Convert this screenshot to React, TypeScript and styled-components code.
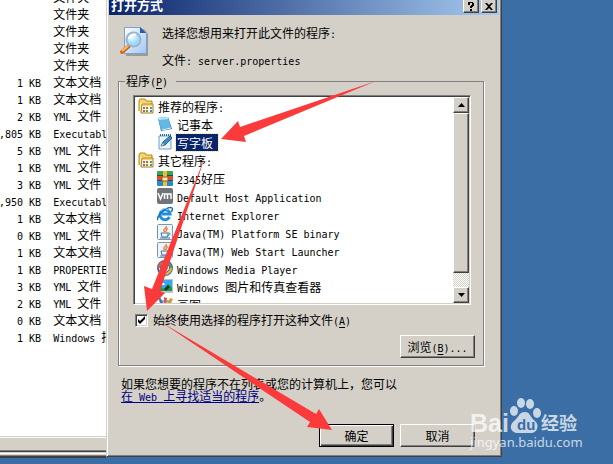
import React from "react";
import styled, { createGlobalStyle, css } from "styled-components";

const Global = createGlobalStyle`
  * { box-sizing: border-box; }
  body { margin: 0; background: #3a6ea5; }
  body, button, input { font: 12px/16px "Noto Sans CJK SC", "Noto Sans", sans-serif; color: #000; }
`;

const Latin = styled.span`
  font-family: "DejaVu Sans Mono", "Liberation Mono", monospace;
  font-size: 10px;
  line-height: 1;
  white-space: pre;
`;

/* Sets half-width runs in the fixed-pitch face, two per full-width glyph. */
function Txt({ children }: { children: string }) {
  const runs = children.match(/[\x00-\x7f]+|[^\x00-\x7f]+/g) || [];
  return (
    <>
      {runs.map((r, i) => (/^[\x00-\x7f]/.test(r) ? <Latin key={i}>{r}</Latin> : r))}
    </>
  );
}

const Key = styled.u`
  font-family: "DejaVu Sans Mono", "Liberation Mono", monospace;
  font-size: 10px;
  line-height: 1;
  text-underline-offset: 2px;
`;

const Desktop = styled.main`
  position: relative;
  display: grid;
  grid-template-columns: minmax(106px, 106fr) minmax(396px, 396fr) 111fr;
  align-items: start;
  min-height: 100vh;
  overflow: hidden;
  background: #3a6ea5;
`;

const Explorer = styled.section`
  display: flex;
  flex-direction: column;
  align-self: stretch;
  min-width: 0;
  margin-bottom: 6px;
  overflow: hidden;
  background: #d4d0c8;
  border-bottom: 2px solid #404040;
`;

const FilePane = styled.div`
  flex: 1;
  overflow: hidden;
  background: #fff;
`;

const FileTable = styled.table`
  margin: -12px 0 0 -1px;
  border-collapse: collapse;
  white-space: nowrap;
  td { height: 17px; padding: 0; line-height: 17px; }
  td:first-child { min-width: 41px; width: 41px; text-align: right; }
  td:last-child { padding-left: 12px; }
`;

const StatusBar = styled.div`
  height: 14px;
  border-top: 1px solid #fff;
  border-bottom: 1px solid #808080;
  box-shadow: 0 -1px #d4d0c8;
`;

const LowerFrame = styled.div`
  height: 5px;
  border-top: 1px solid #404040;
  border-bottom: 1px solid #808080;
  background: linear-gradient(#d4d0c8 1px, #fff 1px, #fff 2px, #e0d4cc 2px);
`;

const Dialog = styled.section`
  display: flex;
  flex-direction: column;
  background: #d4d0c8;
  border: 1px solid;
  border-color: #d4d0c8 #404040 #404040 #d4d0c8;
  border-top: 0;
  box-shadow: inset 1px 0 #fff, inset -1px -1px #808080;
  padding: 0 2px 9px;
`;

const TitleBar = styled.header`
  display: flex;
  align-items: flex-start;
  height: 15px;
  padding: 0 2px;
  background: linear-gradient(90deg, #0a246a, #a6caf0);
  color: #fff;
`;

const Title = styled.h1`
  flex: 1;
  margin: -3px 0 0;
  font-size: 13px;
  line-height: 16px;
  font-weight: 700;
`;

const raised = css`
  border: 1px solid;
  border-color: #fff #404040 #404040 #fff;
  box-shadow: inset -1px -1px #808080;
  background: #d4d0c8;
`;

const CaptionButton = styled.button<{ $gap?: boolean }>`
  ${raised}
  display: grid;
  place-items: center;
  width: 16px;
  height: 14px;
  margin: -1px 0 0 ${(p) => (p.$gap ? 2 : 0)}px;
  padding: 0;
`;

const Intro = styled.div`
  display: flex;
  gap: 13px;
  padding: 10px 10px 0;
`;

const IntroText = styled.div`
  display: flex;
  flex-direction: column;
  gap: 11px;
  p { margin: 0; line-height: 16px; }
`;

const Group = styled.fieldset`
  min-width: 0;
  margin: 5px 15px 0 9px;
  padding: 6px 8px 7px 14px;
  border: 1px solid #808080;
  box-shadow: 1px 1px #fff, inset 1px 0 #fff;
  legend { margin-left: -8px; padding: 0 8px 0 1px; line-height: 16px; }
`;

const ListBox = styled.div`
  display: flex;
  height: 210px;
  margin-right: 4px;
  background: #fff;
  border: 1px solid;
  border-color: #808080 #fff #fff #808080;
  box-shadow: inset 1px 1px #404040, inset -1px -1px #d4d0c8;
  padding: 1px;
`;

const Tree = styled.ul`
  flex: 1;
  min-width: 0;
  margin: 0;
  padding: 0;
  overflow: hidden;
  list-style: none;
`;

const Item = styled.li<{ $child?: boolean }>`
  display: flex;
  align-items: center;
  gap: 3px;
  height: 18px;
  padding-left: ${(p) => (p.$child ? 22 : 3)}px;
  white-space: nowrap;
  svg { flex: none; }
`;

const Label = styled.span<{ $on?: boolean }>`
  height: 17px;
  padding: 0 1px;
  line-height: 17px;
  ${(p) => p.$on && css`
    padding-right: 5px;
    color: #fff;
    background: #0a246a;
    outline: 1px dotted #f5db95;
  `}
`;

const ScrollBar = styled.div`
  display: flex;
  flex-direction: column;
  width: 16px;
  background: repeating-conic-gradient(#fff 0 25%, #d4d0c8 0 50%) 0 0 / 2px 2px;
`;

const ScrollButton = styled.button`
  ${raised}
  display: grid;
  place-items: center;
  height: 16px;
  padding: 0;
`;

const Thumb = styled.div`
  ${raised}
  flex: 0 0 160px;
  margin-bottom: auto;
`;

const Check = styled.label`
  display: flex;
  align-items: center;
  gap: 5px;
  margin: 7px 0 0 2px;
  input {
    appearance: none;
    width: 13px;
    height: 13px;
    margin: 0;
    border: 1px solid;
    border-color: #808080 #fff #fff #808080;
    box-shadow: inset 1px 1px #404040, inset -1px -1px #d4d0c8;
    background: #fff;
  }
  input:checked {
    background: #fff url("data:image/svg+xml,%3Csvg xmlns='http://www.w3.org/2000/svg' viewBox='0 0 11 11'%3E%3Cpath d='M2 4v3l2 2 5-5V1L4 6z'/%3E%3C/svg%3E") center / 11px 11px no-repeat;
  }
`;

const PushButton = styled.button<{ $default?: boolean }>`
  ${raised}
  width: 75px;
  height: 23px;
  padding: 0;
  ${(p) => p.$default && css`
    border-color: #000;
    box-shadow: inset 1px 1px #fff, inset -1px -1px #404040, inset -2px -2px #808080;
  `}
`;

const GroupActions = styled.div`
  display: flex;
  justify-content: flex-end;
  margin-top: 7px;
`;

const Hint = styled.p`
  margin: 12px 12px 0;
  line-height: 12px;
  a { color: #000080; text-underline-offset: 1px; }
`;

const Actions = styled.footer`
  display: flex;
  justify-content: flex-end;
  gap: 6px;
  margin: 21px 24px 0 0;
`;

const Overlay = styled.svg`
  position: absolute;
  top: 0;
  left: 0;
  pointer-events: none;
`;

const Mark = styled.div`
  position: absolute;
  top: 398px;
  left: 470px;
  color: #fff;
  opacity: 0.72;
`;

const Brand = styled.div`
  display: flex;
  height: 37px;
  font: 700 25px/26px "Liberation Sans", sans-serif;
  span { padding-top: 12px; }
  strong { padding-top: 12px; font: 700 18px/24px "Noto Sans CJK SC", sans-serif; }
`;

const Site = styled.div`
  font: 13px/14px "Noto Sans", sans-serif;
`;

type Kind = "folder" | "note" | "write" | "zip" | "vm" | "ie" | "java" | "media" | "picture" | "paint";

function Icon({ kind }: { kind: Kind }) {
  return (
    <svg width="16" height="16" viewBox="0 0 16 16" aria-hidden="true">
      {kind === "folder" && <>
        <path d="M1 13V3l1-2h5l1 2h6v3" fill="#f7d66b" stroke="#b88916" />
        <path d="M2 5h10v2H4v7H2z" fill="#fff0a5" />
        <path d="M4 6h11v9H3z" fill="#fff8df" stroke="#a87c1c" />
        <path d="M4 7h11" stroke="#e1a52c" />
        <path d="M5 9h2v2H5zM12 12h2v2h-2z" fill="#4a86cf" /><path d="M8 9h2v2H8zM5 12h2v2H5z" fill="#d35a38" /><path d="M12 9h2v2h-2zM8 12h2v2H8z" fill="#57a64a" />
      </>}
      {kind === "note" && <>
        <path d="M1 2l10-1 4 12-11 2z" fill="#1b6fae" /><path d="M1 2l10-1 3 11-10 2z" fill="#62b8e6" /><path d="M1 2l10-1v2L2 4z" fill="#b8e8fb" /><path d="M5 14l9-2" stroke="#edf7fb" />
      </>}
      {kind === "write" && <>
        <path d="M2 2h12v13H2z" fill="#eaf6ff" stroke="#6c9fc8" /><path d="M3 1h11" stroke="#286ba5" strokeWidth="2" strokeDasharray="1 1" />
        <path d="M4 12l2-4 7-6 2 2-7 7z" fill="#3c91ce" stroke="#225b8c" /><path d="M4 12l2-3 1 2z" fill="#f3cf80" />
      </>}
      {kind === "zip" && <>
        <rect y="1" width="16" height="5" rx="1" fill="#39a84c" /><rect y="6" width="16" height="5" fill="#e14b37" /><rect y="11" width="16" height="5" rx="1" fill="#278ac7" />
        <path d="M0 5.5h16M0 10.5h16" stroke="#174e5b" /><path d="M6 1h4v15H6z" fill="#f1bb38" /><path d="M5 7h6v4H5z" fill="#fff0a3" stroke="#8e5c17" />
      </>}
      {kind === "vm" && <>
        <rect width="16" height="16" rx="2" fill="#70747a" /><path d="M1 5l2.5 6L6 5M7.5 11V6h3v5V6H14v5" fill="none" stroke="#fff" strokeWidth="1.5" />
      </>}
      {kind === "ie" && <>
        <path d="M12.5 11a5 5 0 1 1 .5-3H5" fill="none" stroke="#238edb" strokeWidth="3" /><path d="M1 14C-2 11 11-1 15 2c1 1 0 3-1 4" fill="none" stroke="#1671b8" strokeWidth="1.5" /><path d="M4 5c2-3 5-3 7-1" fill="none" stroke="#9bdafa" />
      </>}
      {kind === "java" && <>
        <rect x=".5" y=".5" width="15" height="15" rx="1" fill="#eef4f8" stroke="#7797ad" /><path d="M8 8c-4-3 3-3 1-6M9 8c-1-2 2-2 1-4" fill="none" stroke="#e87b25" strokeWidth="1.3" /><path d="M4 9h7v2l-1 2H5zM11 9c4 0 1 3-1 3M3 14h10" fill="none" stroke="#44779f" />
      </>}
      {kind === "media" && <>
        <circle cx="8" cy="8" r="7" fill="#fff" stroke="#3b63b5" strokeWidth="2" /><path d="M8 1a7 7 0 0 1 7 7H8z" fill="#48aa45" /><path d="M8 15a7 7 0 0 0 7-7H8z" fill="#efb82e" /><path d="M8 1a7 7 0 0 0-7 7h7z" fill="#e76430" /><circle cx="8" cy="8" r="4.5" fill="#eef7ff" stroke="#385f9b" /><path d="M6 5l5 3-5 3z" fill="#2765b1" />
      </>}
      {kind === "picture" && <>
        <path d="M0 1h16v14H0z" fill="#bac3c9" /><path d="M1 2h14v11H1z" fill="#35a9ed" /><path d="M1 13l3-4 3 2 4-5 4 4v3z" fill="#259341" /><path d="M2 5h5l1 2H3z" fill="#fff" /><path d="M7 11l4-4 2 2-4 4z" fill="#123f28" />
      </>}
      {kind === "paint" && <>
        <path d="M3 5h11l-2 11H5z" fill="#c5d3e4" stroke="#53759b" /><path d="M1 2l2-1 5 10-2 1z" fill="#3d72c1" /><path d="M7 1l3 1-1 9H7z" fill="#d8613e" /><path d="M13 2l3 1-5 9-2-1z" fill="#d49b2f" />
      </>}
    </svg>
  );
}

function DocumentSearch() {
  return (
    <svg width="30" height="32" viewBox="0 0 30 32" aria-hidden="true">
      <defs>
        <linearGradient id="paper" x2="1" y2="1"><stop stopColor="#fff" /><stop offset="1" stopColor="#9fc5f1" /></linearGradient>
        <radialGradient id="lens" cx=".35" cy=".3"><stop stopColor="#fff" /><stop offset="1" stopColor="#9bdcf9" /></radialGradient>
      </defs>
      <path d="M6 4h19l4 5v22H7z" fill="#777" opacity=".6" />
      <path d="M5.5 2.5h16l6 6v20h-22z" fill="url(#paper)" stroke="#819fcf" />
      <path d="M21 2v6h6z" fill="#245cae" />
      <path d="M10 21l-7 6" stroke="#c96a1c" strokeWidth="4" strokeLinecap="round" /><path d="M3 26l6-5" stroke="#ffb868" strokeWidth="2" />
      <circle cx="14.5" cy="14.5" r="7" fill="url(#lens)" stroke="#9db4cc" strokeWidth="2" /><path d="M10 14c0-4 5-5 7-4" fill="none" stroke="#fff" strokeWidth="2" />
    </svg>
  );
}

const files: [string, string][] = [
  ["", "文件夹"], ["", "文件夹"], ["", "文件夹"], ["", "文件夹"], ["", "文件夹"],
  ["1 KB", "文本文档"], ["1 KB", "文本文档"], ["2 KB", "YML 文件"], [",805 KB", "Executable"],
  ["5 KB", "YML 文件"], ["1 KB", "YML 文件"], ["3 KB", "YML 文件"], [",950 KB", "Executable"],
  ["1 KB", "文本文档"], ["0 KB", "YML 文件"], ["1 KB", "文本文档"], ["1 KB", "PROPERTIES 文件"],
  ["3 KB", "YML 文件"], ["2 KB", "YML 文件"], ["0 KB", "文本文档"], ["1 KB", "Windows 批处理文件"],
];

const programs: { kind: Kind; name: string; child?: boolean; on?: boolean }[] = [
  { kind: "folder", name: "推荐的程序:" },
  { kind: "note", name: "记事本", child: true },
  { kind: "write", name: "写字板", child: true, on: true },
  { kind: "folder", name: "其它程序:" },
  { kind: "zip", name: "2345好压", child: true },
  { kind: "vm", name: "Default Host Application", child: true },
  { kind: "ie", name: "Internet Explorer", child: true },
  { kind: "java", name: "Java(TM) Platform SE binary", child: true },
  { kind: "java", name: "Java(TM) Web Start Launcher", child: true },
  { kind: "media", name: "Windows Media Player", child: true },
  { kind: "picture", name: "Windows 图片和传真查看器", child: true },
  { kind: "paint", name: "画图", child: true },
];

export default function App() {
  return (
    <Desktop>
      <Global />
      <Explorer>
        <FilePane>
          <FileTable>
            <tbody>
              {files.map(([size, type], i) => (
                <tr key={i}><td><Txt>{size}</Txt></td><td><Txt>{type}</Txt></td></tr>
              ))}
            </tbody>
          </FileTable>
        </FilePane>
        <StatusBar />
        <LowerFrame />
      </Explorer>

      <Dialog aria-label="打开方式">
        <TitleBar>
          <Title>打开方式</Title>
          <CaptionButton aria-label="帮助">
            <svg width="8" height="9" viewBox="0 0 8 9"><path d="M1 0h5v1h1v3H6v1H5v1H3V4h1V3h1V1H3v2H1V1h0zM3 7h2v2H3z" /></svg>
          </CaptionButton>
          <CaptionButton aria-label="关闭" $gap>
            <svg width="8" height="7" viewBox="0 0 8 7"><path d="M0 0h2l2 2 2-2h2L5 3.5 8 7H6L4 5 2 7H0l3-3.5z" /></svg>
          </CaptionButton>
        </TitleBar>
        <Intro>
          <DocumentSearch />
          <IntroText>
            <p><Txt>选择您想用来打开此文件的程序:</Txt></p>
            <p><Txt>文件: server.properties</Txt></p>
          </IntroText>
        </Intro>
        <Group>
          <legend>程序<Txt>(</Txt><Key>P</Key><Txt>)</Txt></legend>
          <ListBox>
            <Tree>
              {programs.map((p, i) => (
                <Item key={i} $child={p.child}>
                  <Icon kind={p.kind} />
                  <Label $on={p.on}><Txt>{p.name}</Txt></Label>
                </Item>
              ))}
            </Tree>
            <ScrollBar>
              <ScrollButton aria-label="向上"><svg width="7" height="4"><path d="M3.5 0L7 4H0z" /></svg></ScrollButton>
              <Thumb />
              <ScrollButton aria-label="向下"><svg width="7" height="4"><path d="M0 0h7L3.5 4z" /></svg></ScrollButton>
            </ScrollBar>
          </ListBox>
          <Check>
            <input type="checkbox" defaultChecked />
            <span>始终使用选择的程序打开这种文件<Txt>(</Txt><Key>A</Key><Txt>)</Txt></span>
          </Check>
          <GroupActions>
            <PushButton>浏览<Txt>(</Txt><Key>B</Key><Txt>)...</Txt></PushButton>
          </GroupActions>
        </Group>
        <Hint>
          如果您想要的程序不在列表或您的计算机上，您可以<br />
          <a href="#web"><Txt>在 Web 上寻找适当的程序</Txt></a>。
        </Hint>
        <Actions>
          <PushButton $default>确定</PushButton>
          <PushButton>取消</PushButton>
        </Actions>
      </Dialog>

      <Overlay width="613" height="464" viewBox="0 0 613 464" aria-hidden="true">
        <g fill="#fb3b3b">
          <path d="M376 81L244 136L246 142L221 139L238 121L240 127Z" />
          <path d="M205 157L160 291L165 293L147 311L144 286L152 289Z" />
          <path d="M161 322L316 414L319 409L332 430L307 427L310 422Z" />
        </g>
      </Overlay>
      <Mark>
        <Brand><span>Bai</span>
          <svg width="32" height="36" viewBox="0 0 32 36" aria-hidden="true">
            <g fill="#fff"><ellipse cx="5" cy="13" rx="4" ry="5" /><ellipse cx="12" cy="5" rx="4" ry="5" /><ellipse cx="21" cy="6" rx="4" ry="5" /><ellipse cx="28" cy="15" rx="4" ry="5" /><path d="M16 14c5 0 5 5 10 9 5 4 2 12-4 12H9c-7 0-10-7-4-12 5-4 5-9 11-9z" /></g>
            <text x="8" y="32" fontFamily="Liberation Sans" fontSize="15" fontWeight="700" fill="#3a6ea5">du</text>
          </svg>
          <strong>经验</strong>
        </Brand>
        <Site>jingyan.baidu.com</Site>
      </Mark>
    </Desktop>
  );
}
